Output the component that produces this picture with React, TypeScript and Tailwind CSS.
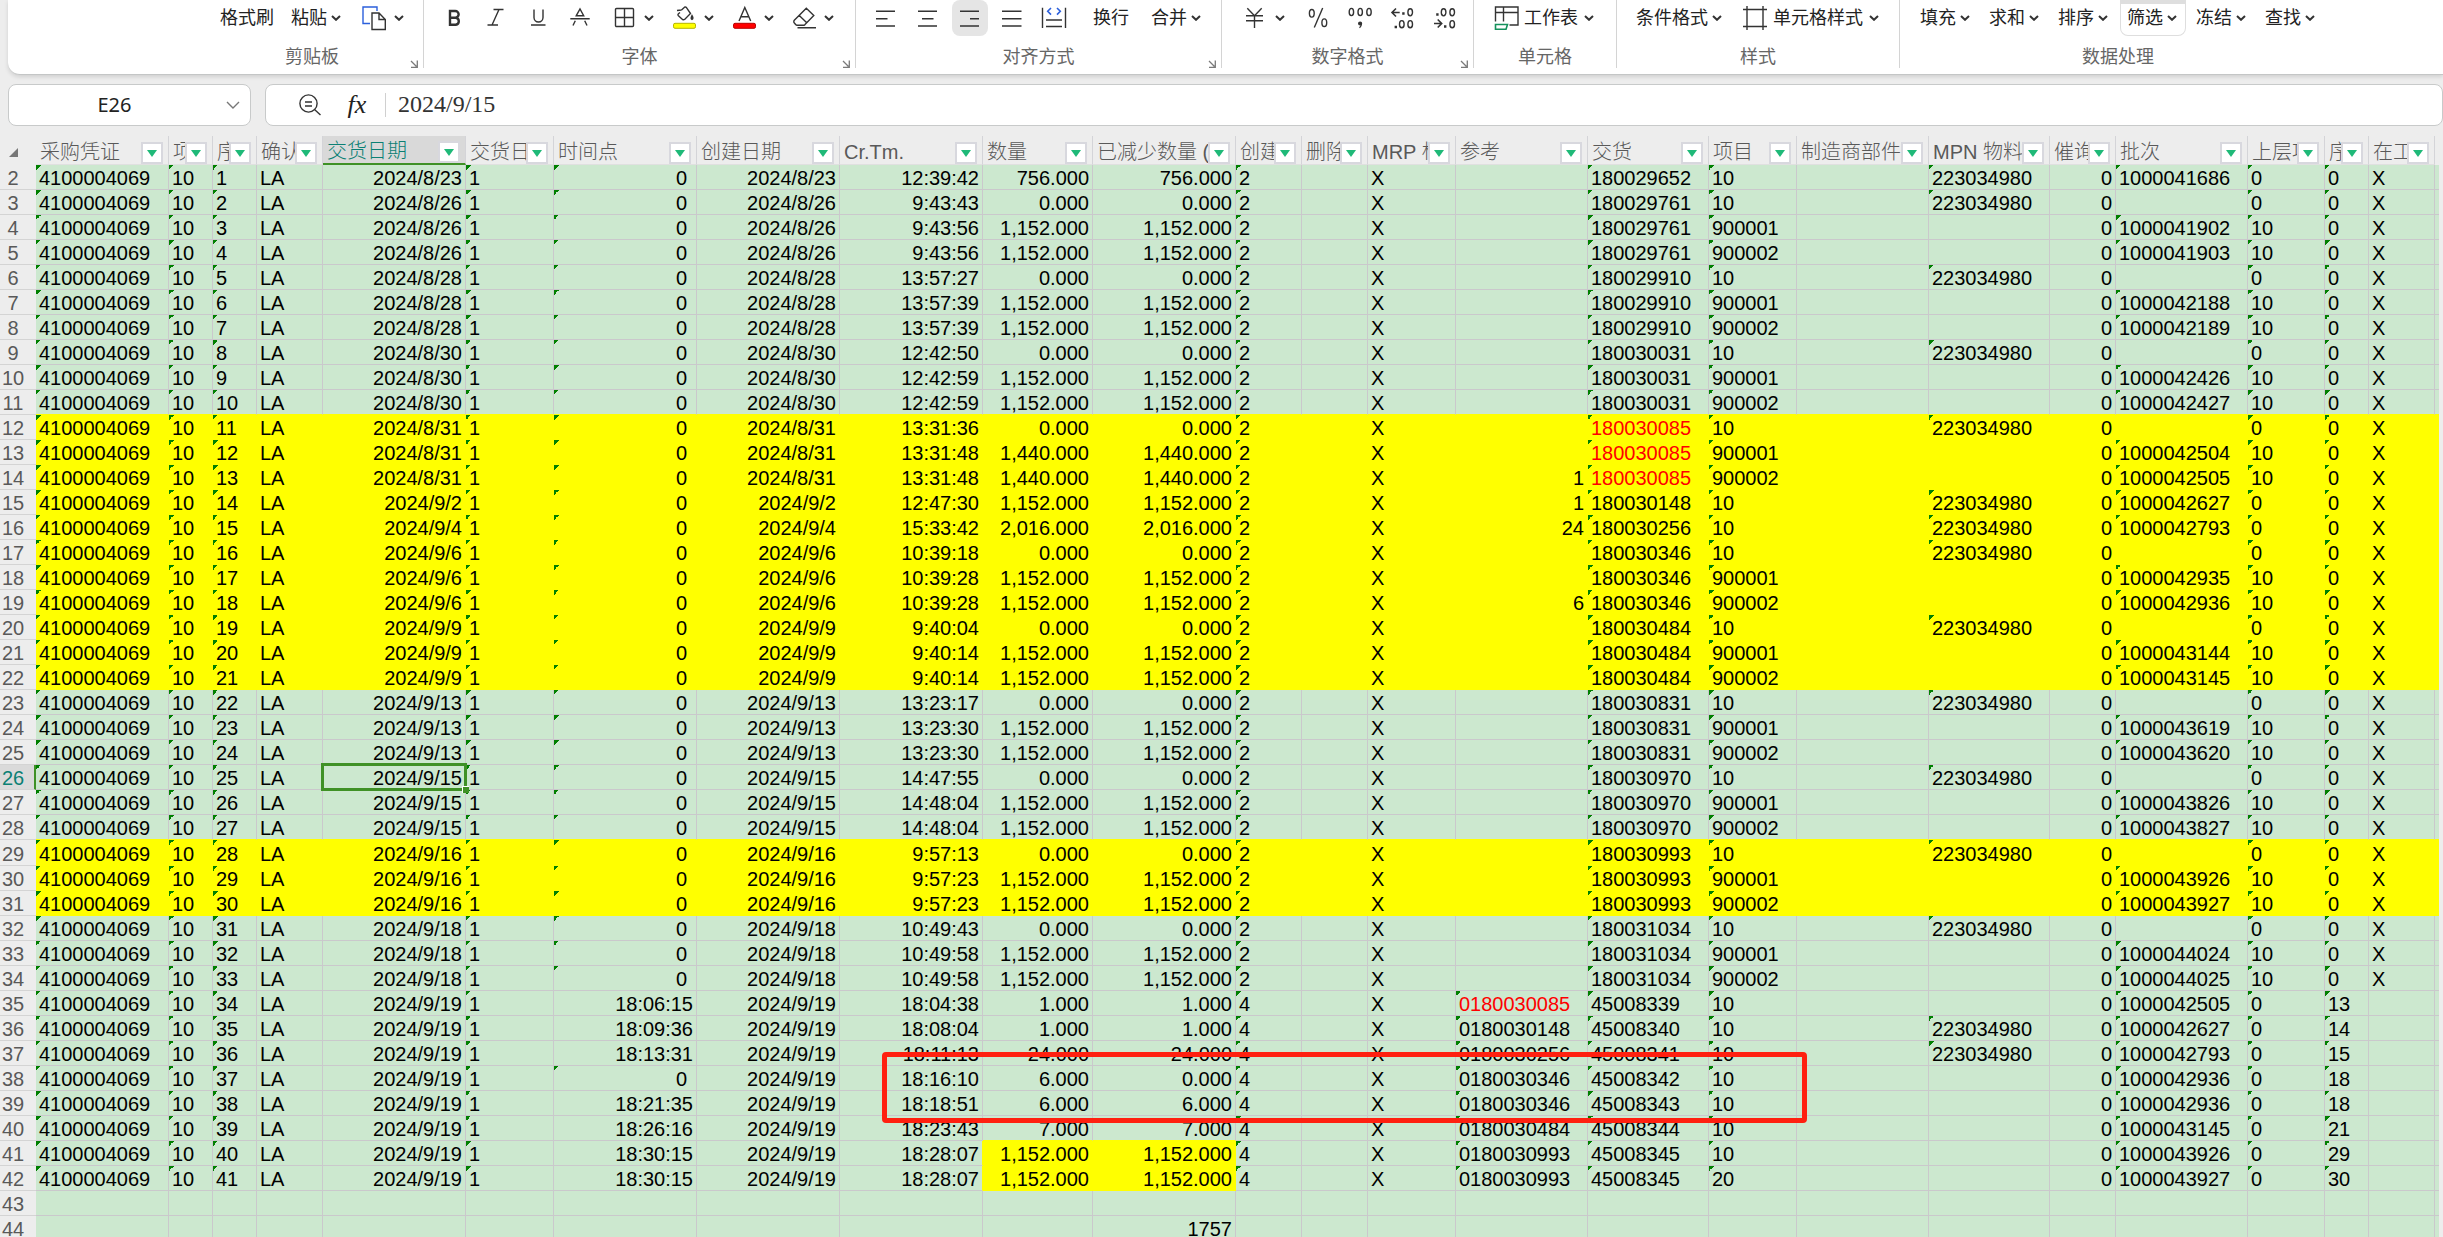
import { useState, type ReactNode } from "react";
import clsx from "clsx";

type Column = {
  title: string;
  width: string;
  align?: "right";
  // numbers stored as text get the green corner mark
  asText?: boolean;
};

const columns: Column[] = [
  { title: "采购凭证", width: "w-[133px]", asText: true },
  { title: "项目", width: "w-[44px]", asText: true },
  { title: "序号", width: "w-[44px]", asText: true },
  { title: "确认", width: "w-[66px]" },
  { title: "交货日期", width: "w-[143px]", align: "right" },
  { title: "交货日期", width: "w-[88px]", asText: true },
  { title: "时间点", width: "w-[143px]", align: "right" },
  { title: "创建日期", width: "w-[143px]", align: "right" },
  { title: "Cr.Tm.", width: "w-[143px]", align: "right" },
  { title: "数量", width: "w-[110px]", align: "right" },
  { title: "已减少数量 (", width: "w-[143px]", align: "right" },
  { title: "创建", width: "w-[66px]", asText: true },
  { title: "删除", width: "w-[66px]" },
  { title: "MRP 标", width: "w-[88px]" },
  { title: "参考", width: "w-[132px]" },
  { title: "交货", width: "w-[121px]", asText: true },
  { title: "项目", width: "w-[88px]", asText: true },
  { title: "制造商部件", width: "w-[132px]" },
  { title: "MPN 物料", width: "w-[121px]", asText: true },
  { title: "催询", width: "w-[66px]", align: "right" },
  { title: "批次", width: "w-[132px]", asText: true },
  { title: "上层项", width: "w-[77px]", asText: true },
  { title: "序号", width: "w-[44px]", asText: true },
  { title: "在工", width: "w-[66px]" },
];

const TIME_POINT = 6;
const QTY = 9;
const REDUCED = 10;
const REFERENCE = 14;
const DELIVERY = 15;
const SELECTED_ROW = 26;
const SELECTED_COL = 4;

// date, time point, Cr.Tm., quantity, reduced, reference, delivery, item, MPN, batch, parent, seq
const records = [
  "2024/8/23|0|12:39:42|756.000|756.000||180029652|10|223034980|1000041686|0|0",
  "2024/8/26|0|9:43:43|0.000|0.000||180029761|10|223034980||0|0",
  "2024/8/26|0|9:43:56|1,152.000|1,152.000||180029761|900001||1000041902|10|0",
  "2024/8/26|0|9:43:56|1,152.000|1,152.000||180029761|900002||1000041903|10|0",
  "2024/8/28|0|13:57:27|0.000|0.000||180029910|10|223034980||0|0",
  "2024/8/28|0|13:57:39|1,152.000|1,152.000||180029910|900001||1000042188|10|0",
  "2024/8/28|0|13:57:39|1,152.000|1,152.000||180029910|900002||1000042189|10|0",
  "2024/8/30|0|12:42:50|0.000|0.000||180030031|10|223034980||0|0",
  "2024/8/30|0|12:42:59|1,152.000|1,152.000||180030031|900001||1000042426|10|0",
  "2024/8/30|0|12:42:59|1,152.000|1,152.000||180030031|900002||1000042427|10|0",
  "2024/8/31|0|13:31:36|0.000|0.000||180030085|10|223034980||0|0",
  "2024/8/31|0|13:31:48|1,440.000|1,440.000||180030085|900001||1000042504|10|0",
  "2024/8/31|0|13:31:48|1,440.000|1,440.000|1|180030085|900002||1000042505|10|0",
  "2024/9/2|0|12:47:30|1,152.000|1,152.000|1|180030148|10|223034980|1000042627|0|0",
  "2024/9/4|0|15:33:42|2,016.000|2,016.000|24|180030256|10|223034980|1000042793|0|0",
  "2024/9/6|0|10:39:18|0.000|0.000||180030346|10|223034980||0|0",
  "2024/9/6|0|10:39:28|1,152.000|1,152.000||180030346|900001||1000042935|10|0",
  "2024/9/6|0|10:39:28|1,152.000|1,152.000|6|180030346|900002||1000042936|10|0",
  "2024/9/9|0|9:40:04|0.000|0.000||180030484|10|223034980||0|0",
  "2024/9/9|0|9:40:14|1,152.000|1,152.000||180030484|900001||1000043144|10|0",
  "2024/9/9|0|9:40:14|1,152.000|1,152.000||180030484|900002||1000043145|10|0",
  "2024/9/13|0|13:23:17|0.000|0.000||180030831|10|223034980||0|0",
  "2024/9/13|0|13:23:30|1,152.000|1,152.000||180030831|900001||1000043619|10|0",
  "2024/9/13|0|13:23:30|1,152.000|1,152.000||180030831|900002||1000043620|10|0",
  "2024/9/15|0|14:47:55|0.000|0.000||180030970|10|223034980||0|0",
  "2024/9/15|0|14:48:04|1,152.000|1,152.000||180030970|900001||1000043826|10|0",
  "2024/9/15|0|14:48:04|1,152.000|1,152.000||180030970|900002||1000043827|10|0",
  "2024/9/16|0|9:57:13|0.000|0.000||180030993|10|223034980||0|0",
  "2024/9/16|0|9:57:23|1,152.000|1,152.000||180030993|900001||1000043926|10|0",
  "2024/9/16|0|9:57:23|1,152.000|1,152.000||180030993|900002||1000043927|10|0",
  "2024/9/18|0|10:49:43|0.000|0.000||180031034|10|223034980||0|0",
  "2024/9/18|0|10:49:58|1,152.000|1,152.000||180031034|900001||1000044024|10|0",
  "2024/9/18|0|10:49:58|1,152.000|1,152.000||180031034|900002||1000044025|10|0",
  "2024/9/19|18:06:15|18:04:38|1.000|1.000|0180030085|45008339|10||1000042505|0|13",
  "2024/9/19|18:09:36|18:08:04|1.000|1.000|0180030148|45008340|10|223034980|1000042627|0|14",
  "2024/9/19|18:13:31|18:11:13|24.000|24.000|0180030256|45008341|10|223034980|1000042793|0|15",
  "2024/9/19|0|18:16:10|6.000|0.000|0180030346|45008342|10||1000042936|0|18",
  "2024/9/19|18:21:35|18:18:51|6.000|6.000|0180030346|45008343|10||1000042936|0|18",
  "2024/9/19|18:26:16|18:23:43|7.000|7.000|0180030484|45008344|10||1000043145|0|21",
  "2024/9/19|18:30:15|18:28:07|1,152.000|1,152.000|0180030993|45008345|10||1000043926|0|29",
  "2024/9/19|18:30:15|18:28:07|1,152.000|1,152.000|0180030993|45008345|20||1000043927|0|30",
];

const blankRow = columns.map(() => "");

const rows = [
  ...records.map((record, i) => {
    const [date, point, time, qty, reduced, ref, delivery, item, mpn, batch, parent, seq] =
      record.split("|");
    const received = i >= 33;
    return [
      "4100004069", "10", String(i + 1), "LA", date, "1", point, date, time, qty, reduced,
      received ? "4" : "2", "", "X", ref, delivery, item, "", mpn, "0", batch, parent, seq,
      received ? "" : "X",
    ];
  }),
  blankRow,
  blankRow.map((_, c) => (c === REDUCED ? "1757" : "")),
];

function isYellow(row: number, col: number) {
  if ((row >= 12 && row <= 22) || (row >= 29 && row <= 31)) return true;
  return (row === 41 || row === 42) && (col === QTY || col === REDUCED);
}

function isRed(row: number, col: number) {
  if (col === DELIVERY) return row >= 12 && row <= 14;
  return col === REFERENCE && row === 35;
}

function hasMark(col: number, value: string) {
  if (!value) return false;
  if (col === TIME_POINT) return value === "0";
  if (col === REFERENCE) return value.length > 2;
  return Boolean(columns[col].asText);
}

function Icon({ children, className }: { children: ReactNode; className?: string }) {
  return (
    <svg
      viewBox="0 0 24 24"
      className={clsx("size-6 shrink-0 overflow-visible", className)}
      fill="none"
      stroke="#333333"
      strokeWidth="1.4"
      aria-hidden="true"
    >
      {children}
    </svg>
  );
}

function Chevron() {
  return (
    <svg viewBox="0 0 10 6" className="w-2.5 h-1.5 shrink-0" fill="none" stroke="#333333" strokeWidth="2">
      <path d="M1 1l4 3.8L9 1" />
    </svg>
  );
}

function IconButton({ label, active, children }: { label: string; active?: boolean; children: ReactNode }) {
  return (
    <button
      type="button"
      aria-label={label}
      className={clsx("flex items-center justify-center w-9 h-9 rounded-lg", active && "bg-[#e5e5e5]")}
    >
      <Icon>{children}</Icon>
    </button>
  );
}

function DropIconButton({ label, children }: { label: string; children: ReactNode }) {
  return (
    <button type="button" aria-label={label} className="flex items-center gap-2 w-[57px] h-9 pl-[9px]">
      <Icon>{children}</Icon>
      <Chevron />
    </button>
  );
}

function TextButton({
  text,
  icon,
  drop = true,
  className,
}: {
  text: string;
  icon?: ReactNode;
  drop?: boolean;
  className?: string;
}) {
  return (
    <button
      type="button"
      className={clsx(
        "flex items-center h-9 pl-[7px] text-lg leading-6 text-[#222222] whitespace-nowrap",
        icon ? "gap-1.5" : "gap-1",
        drop ? "pr-[9px]" : "pr-[7px]",
        className
      )}
    >
      {icon && <Icon>{icon}</Icon>}
      {text}
      {drop && <Chevron />}
    </button>
  );
}

function Group({
  title,
  className,
  launcher,
  last,
  children,
}: {
  title: string;
  className?: string;
  launcher?: boolean;
  last?: boolean;
  children: ReactNode;
}) {
  return (
    <section
      className={clsx("relative flex flex-col shrink-0 h-[68px]", !last && "border-r border-[#d4d4d4]")}
    >
      <div className={clsx("flex items-center gap-[3px]", className)}>{children}</div>
      <h2 className="mt-2.5 text-center text-lg leading-[22px] text-[#666666]">{title}</h2>
      {launcher && (
        <button type="button" aria-label={title + "设置"} className="absolute bottom-0 right-[5px]">
          <svg viewBox="0 0 8 8" className="size-2" fill="none" stroke="#7a7a7a" strokeWidth="1.3">
            <path d="M1 1l5.5 5.5M7.3 0.5v6.8H1" />
          </svg>
        </button>
      )}
    </section>
  );
}

function Ribbon() {
  return (
    <div className="flex ml-2 h-[75px] overflow-hidden rounded-bl-xl border-b border-[#c4c6c6] bg-white shadow-[0_2px_4px_rgba(0,0,0,0.12)]">
      <div className="w-[193px] shrink-0" />
      <Group title="剪贴板" launcher className="pl-3 pr-[13px]">
        <TextButton text="格式刷" drop={false} />
        <TextButton text="粘贴" />
        <DropIconButton label="复制">
          <path d="M15 5V1H1V17.5H8" stroke="#2b5fdc" />
          <path d="M10 7H17L23.3 13.5V23.5H10ZM17 7V13.5H23.3" />
        </DropIconButton>
      </Group>

      <Group title="字体" launcher className="pl-3 pr-[15px]">
        <div className="flex gap-1.5">
          <IconButton label="加粗">
            <path
              strokeWidth="2.4"
              d="M8 5H13.3a3.3 3.3 0 0 1 0 6.7H8ZM8 11.7h5.8a3.6 3.6 0 0 1 0 7.1H8Z"
            />
          </IconButton>
          <IconButton label="倾斜">
            <path d="M9.5 3.5H19.5M3.5 19H14M15 3.5L8 19" />
          </IconButton>
          <IconButton label="下划线">
            <path d="M8 3.5V11.5a4.5 4.5 0 0 0 9 0V3.5M5 19H19.5" />
          </IconButton>
          <IconButton label="删除线">
            <path d="M2.3 12.7H21.7M8.3 9.7L12 3 15.7 9.7ZM7.3 14.7L5 19.5M16.7 14.7L19 19.5" />
          </IconButton>
        </div>
        <div className="flex gap-[3px] ml-0.5">
          <DropIconButton label="边框">
            <rect x="3.5" y="2.5" width="18" height="18" rx="1" />
            <path d="M12.5 2.5V20.5M3.5 11.5H21.5" />
          </DropIconButton>
          <DropIconButton label="填充颜色">
            <path d="M5 4.5L9.5 4M9.5 4L12.5 1.2Q13.5 0.6 14.5 1.6L18.5 7.5 12.6 13.5Q11.5 14.2 10.5 13.4L6.2 9.5Q5.6 8.6 6.4 7.8L8 6.5" />
            <path d="M20 9.5q1.8 3 0 4q-1.6-1 0-4z" fill="#333333" />
            <rect x="1.5" y="17.3" width="22" height="5" rx="1.5" fill="#ffff00" stroke="#b5b500" strokeWidth="1" />
          </DropIconButton>
          <DropIconButton label="字体颜色">
            <path d="M7 15L12.8 1.5 18.7 15M9 10.8H16.7" />
            <rect x="1.5" y="17.3" width="22" height="5" rx="1.5" fill="#ff0000" stroke="#b80000" strokeWidth="1" />
          </DropIconButton>
          <DropIconButton label="清除">
            <path d="M14.3 2.2L21.8 9.5 13 18.6Q12 19.4 11 19.3H5Q4 19 3.2 18L1.9 16.4Q1.5 15.2 2.3 14.2ZM7 9.2L15 17M5.5 21.8H24" />
          </DropIconButton>
        </div>
      </Group>

      <Group title="对齐方式" launcher className="pl-3 pr-[11px]">
        <div className="flex gap-1.5">
          <IconButton label="左对齐">
            <path d="M2 5.2H21M2 12.7H13.5M2 20H21" />
          </IconButton>
          <IconButton label="居中">
            <path d="M2 5.2H21M6 12.7H17.5M2 20H21" />
          </IconButton>
          <IconButton label="右对齐" active>
            <path d="M2 5.2H21M12 12.7H21M2 20H21" />
          </IconButton>
          <IconButton label="两端对齐">
            <path d="M2 5.2H21.5M2 12.7H21.5M2 20H21.5" />
          </IconButton>
          <IconButton label="分散对齐">
            <path d="M0.5 1.7V22M23.5 1.7V22M4 14H20M4 20.5H20" />
            <path d="M9 2L5.7 5.3 9 8.6M15 2L18.3 5.3 15 8.6" stroke="#2b5fdc" strokeWidth="1.6" />
          </IconButton>
        </div>
        <TextButton text="换行" drop={false} className="ml-[11px]" />
        <TextButton text="合并" className="ml-[5px]" />
      </Group>

      <Group title="数字格式" launcher className="pl-3 pr-[11px]">
        <DropIconButton label="货币">
          <path d="M4.3 2.2L11.5 9.7 18.7 2.2M3 9.7H20M3 14.7H20M11.5 9.7V22" />
        </DropIconButton>
        <div className="flex gap-1.5 ml-1.5">
          <IconButton label="百分比">
            <ellipse cx="5.8" cy="7.3" rx="2.4" ry="3.8" />
            <ellipse cx="18.3" cy="16.7" rx="2.4" ry="3.8" />
            <path d="M8.3 21.5L16.7 2" />
          </IconButton>
          <IconButton label="千位分隔">
            <ellipse cx="3.4" cy="6" rx="2.2" ry="3.6" />
            <ellipse cx="12.2" cy="6" rx="2.2" ry="3.6" />
            <ellipse cx="21" cy="6" rx="2.2" ry="3.6" />
            <circle cx="12.1" cy="17.5" r="1.4" fill="#333333" />
            <path d="M13.3 17.5Q13.5 20 11.5 21.8" />
          </IconButton>
          <IconButton label="增加小数位">
            <path d="M9.7 6.5H2M6 2.5L2 6.5 6 10.5" strokeWidth="1.6" />
            <path d="M12.2 7.5h2.4M4.6 21h2.4" strokeWidth="2.6" />
            <ellipse cx="20.2" cy="6.3" rx="2.3" ry="3.6" />
            <ellipse cx="11.8" cy="18.2" rx="2.3" ry="3.6" />
            <ellipse cx="20.2" cy="18.2" rx="2.3" ry="3.6" />
          </IconButton>
          <IconButton label="减少小数位">
            <path d="M2 17.5H9.7M5.7 13.5L9.7 17.5 5.7 21.5" strokeWidth="1.6" />
            <path d="M4.2 8.5h2.4M12 20.5h2.4" strokeWidth="2.6" />
            <ellipse cx="11.6" cy="6.3" rx="2.3" ry="3.6" />
            <ellipse cx="20.2" cy="6.3" rx="2.3" ry="3.6" />
            <ellipse cx="20.2" cy="18.2" rx="2.3" ry="3.6" />
          </IconButton>
        </div>
      </Group>

      <Group title="单元格" className="px-[13px]">
        <TextButton
          text="工作表"
          icon={
            <>
              <path d="M1.5 15.5V1H24V19H15.5M1.5 6.5H24M9.5 1V15.5" />
              <path d="M1.5 18.5H13.5L12 23.3H1.5Z" stroke="#15915c" strokeWidth="1.6" />
            </>
          }
        />
      </Group>

      <Group title="样式" className="pl-3 pr-[11px]">
        <TextButton text="条件格式" />
        <TextButton
          text="单元格样式"
          className="ml-0.5"
          icon={<path d="M4 0V24M20 0V24M0 3.5H24M0 20.5H24" />}
        />
      </Group>

      <Group title="数据处理" last className="pl-[13px] pr-3">
        <TextButton text="填充" />
        <TextButton text="求和" />
        <TextButton text="排序" />
        <TextButton
          text="筛选"
          className="rounded-b-lg border-x border-b border-t-4 border-[#dedede] pl-1.5! pr-2! pb-[3px]"
        />
        <TextButton text="冻结" />
        <TextButton text="查找" />
      </Group>
    </div>
  );
}

function FormulaBar({ formula, setFormula }: { formula: string; setFormula: (value: string) => void }) {
  return (
    <div className="flex gap-3.5 pl-2 mt-[9px]">
      <div className="flex items-center w-[243px] h-[42px] shrink-0 rounded-lg border border-[#c8caca] bg-white">
        <input
          aria-label="名称框"
          defaultValue="E26"
          className="w-[211px] text-center text-xl leading-6 text-[#222222] font-['Noto_Sans',sans-serif] outline-none"
        />
        <button type="button" aria-label="展开名称">
          <svg viewBox="0 0 14 8" className="ml-1.5 w-3.5 h-2" fill="none" stroke="#777777" strokeWidth="1.4">
            <path d="M1 1l6 6 6-6" />
          </svg>
        </button>
      </div>
      <div className="flex items-center flex-1 h-[42px] rounded-lg border border-[#c8caca] bg-white pl-[33px]">
        <button type="button" aria-label="搜索">
          <Icon>
            <circle cx="9.5" cy="10.5" r="8.6" />
            <path d="M15.8 16.8L21.5 22M6 9H13M6 13H13" />
          </Icon>
        </button>
        <button
          type="button"
          aria-label="插入函数"
          className="ml-[22px] w-[24px] text-[26px] leading-8 text-[#222222] italic font-['Liberation_Serif',serif]"
        >
          fx
        </button>
        <div className="ml-4 mr-3 w-px h-6 bg-[#d0d0d0]" />
        <input
          aria-label="编辑栏"
          value={formula}
          onChange={(e) => setFormula(e.target.value)}
          className="flex-1 pb-0.5 text-2xl leading-8 text-[#333333] font-['Liberation_Serif',serif] outline-none"
        />
      </div>
    </div>
  );
}

function HeaderCell({ column, selected }: { column: Column; selected: boolean }) {
  return (
    <th
      scope="col"
      className={clsx(
        "p-0 border-r border-r-[#d4d4d8] font-light align-bottom",
        selected
          ? "bg-[#d9d9d9] text-[#0b8074] border-b-2 border-b-[#3f9126]"
          : "text-[#595959] border-b border-b-[#e0e0e0]"
      )}
    >
      <div className="flex items-end h-[27px] pl-1 pr-[5px]">
        <span className="flex-1 min-w-0 overflow-hidden text-left leading-6 whitespace-nowrap">
          {column.title}
        </span>
        <button
          type="button"
          aria-label={"筛选" + column.title}
          className="flex items-center justify-center size-[22px] shrink-0 border-2 border-[#d8d8de] bg-white"
        >
          <svg viewBox="0 0 10 7" className="w-2.5 h-[7px]" fill="#1fb978">
            <path d="M0 0h10L5 7z" />
          </svg>
        </button>
      </div>
    </th>
  );
}

function Cell({ row, col, value }: { row: number; col: number; value: string }) {
  const yellow = isYellow(row, col);
  const selected = row === SELECTED_ROW && col === SELECTED_COL;
  const right = columns[col].align === "right" || (col === REFERENCE && value.length < 3);

  return (
    <td
      className={clsx(
        "p-0 pt-0.5 pl-[3px] border-r border-b whitespace-nowrap",
        yellow ? "bg-[#ffff00]" : "bg-[#cce8cf]",
        yellow || (col === QTY - 1 && isYellow(row, QTY)) ? "border-r-[#ffff00]" : "border-r-[#cac8cc]",
        yellow || isYellow(row + 1, col) ? "border-b-[#ffff00]" : "border-b-[#cac8cc]",
        right ? "text-right" : "text-left",
        col === TIME_POINT && value === "0" ? "pr-[9px]" : "pr-[3px]",
        isRed(row, col) && "text-[#ff0000]",
        hasMark(col, value) &&
          "bg-[linear-gradient(135deg,#008000_50%,transparent_50%)] bg-[length:5px_5px] bg-no-repeat",
        selected && "relative"
      )}
    >
      {value}
      {selected && (
        <>
          <span className="absolute -inset-0.5 border-[3px] border-[#3f9126] pointer-events-none" />
          <span className="absolute -right-1 -bottom-1 size-[7px] border-l border-t border-white bg-[#3f9126]" />
        </>
      )}
    </td>
  );
}

function Sheet() {
  return (
    <div className="relative mt-2.5 pr-1">
      <table className="w-full table-fixed border-separate border-spacing-0 text-xl leading-[22px] text-black">
        <colgroup>
          <col className="w-9" />
          {columns.map((column, c) => (
            <col key={c} className={column.width} />
          ))}
          <col />
        </colgroup>
        <thead>
          <tr className="h-[29px]">
            <td className="p-0 pt-1">
              <svg viewBox="0 0 9 9" className="ml-[9px] size-[9px]" fill="#777777">
                <path d="M9 0V9H0z" />
              </svg>
            </td>
            {columns.map((column, c) => (
              <HeaderCell key={c} column={column} selected={c === SELECTED_COL} />
            ))}
            <td className="p-0" />
          </tr>
        </thead>
        <tbody>
          {rows.map((cells, i) => {
            const row = i + 2;
            const current = row === SELECTED_ROW;
            return (
              <tr key={row} className={row === 29 ? "h-[26px]" : "h-[25px]"}>
                <th
                  scope="row"
                  className={clsx(
                    "p-0 pt-0.5 border-b border-b-[#d4d4d4] font-normal text-center",
                    current
                      ? "pr-2 border-r-2 border-r-[#3f9126] bg-[#dadada] text-[#0b8074]"
                      : "pr-2.5 text-[#595959]"
                  )}
                >
                  {row}
                </th>
                {cells.map((value, c) => (
                  <Cell key={c} row={row} col={c} value={value} />
                ))}
                <td
                  className={clsx(
                    "p-0 border-b",
                    isYellow(row, 0) ? "bg-[#ffff00]" : "bg-[#cce8cf]",
                    isYellow(row, 0) || isYellow(row + 1, 0) ? "border-b-[#ffff00]" : "border-b-[#cac8cc]"
                  )}
                />
              </tr>
            );
          })}
        </tbody>
      </table>
      {/* hand-drawn mark around rows 38 and 39 */}
      <div className="absolute left-[882px] top-[916px] w-[925px] h-[71px] rounded-sm border-[5px] border-[#ff2010] pointer-events-none" />
    </div>
  );
}

export default function App() {
  const [formula, setFormula] = useState("2024/9/15");

  return (
    <main className="h-screen overflow-hidden bg-[#ededed] font-['Liberation_Sans','Noto_Sans_CJK_SC',sans-serif]">
      <Ribbon />
      <FormulaBar formula={formula} setFormula={setFormula} />
      <Sheet />
    </main>
  );
}
